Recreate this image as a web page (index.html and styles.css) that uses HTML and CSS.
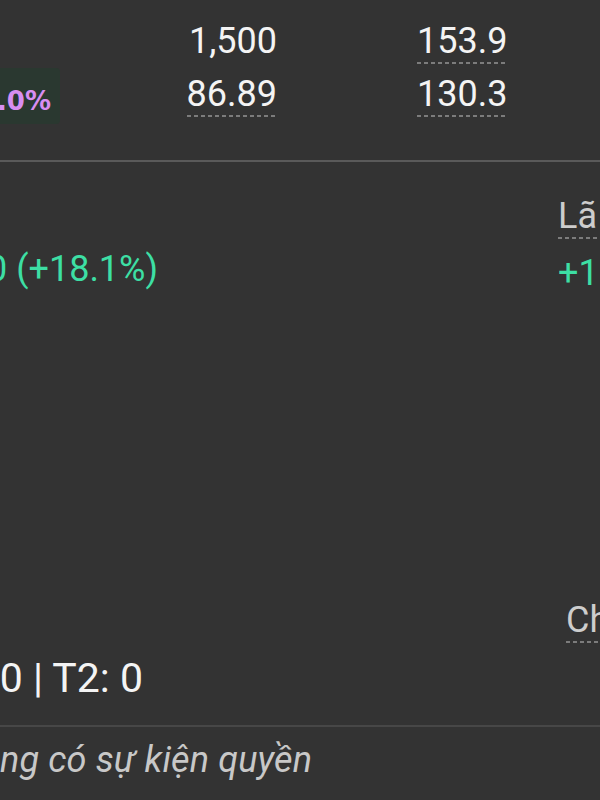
FILE: index.html
```html
<!DOCTYPE html>
<html lang="vi">
<head>
<meta charset="utf-8">
<title>Chi tiết mã</title>
<link rel="stylesheet" href="styles.css">
</head>
<body>
<section class="stats">
  <div class="stats-row">
    <div class="slot-badge"></div>
    <div class="slot-a"><span class="num">1,500</span></div>
    <div class="slot-gap"></div>
    <div class="slot-b"><span class="num dashed">153.9</span></div>
  </div>
  <div class="stats-row">
    <div class="slot-badge"><span class="badge">.0%</span></div>
    <div class="slot-a"><span class="num dashed">86.89</span></div>
    <div class="slot-gap"></div>
    <div class="slot-b"><span class="num dashed">130.3</span></div>
  </div>
</section>
<hr class="divider-strong">
<section class="detail">
  <div class="detail-left">
    <div class="gain-line"><span>0 (+18.1%)</span></div>
    <div class="t-line"><span>0 | T2: 0</span></div>
  </div>
  <div class="detail-right">
    <div class="label-line"><span class="label dashed">Lã</span></div>
    <div class="pl-value">+1</div>
    <div class="label-line more"><span class="label dashed">Ch</span></div>
  </div>
</section>
<hr class="divider-soft">
<div class="event-line"><span>ng có sự kiện quyền</span></div>
</body>
</html>
```
FILE: styles.css
```css
html, body {
  margin: 0;
  padding: 0;
  width: 600px;
  height: 800px;
  overflow: hidden;
}
body {
  background: #333333;
  color: #f4f4f4;
  font-family: Roboto, "Noto Sans", "Liberation Sans", sans-serif;
}
.dashed {
  background-image: repeating-linear-gradient(90deg, #7c7c7c 0 4px, transparent 4px 7px);
  background-size: 100% 2px;
  background-position: left bottom;
  background-repeat: no-repeat;
}
.stats {
  box-sizing: border-box;
  height: 160px;
  padding-top: 20px;
}
.stats-row {
  display: grid;
  grid-template-columns: 60px 217px 140px 91px;
  align-items: start;
  height: 53px;
}
.slot-a {
  display: flex;
  justify-content: flex-end;
}
.slot-b {
  display: flex;
  justify-content: flex-start;
}
.num {
  display: inline-block;
  font-size: 36px;
  line-height: 42px;
  padding-bottom: 2px;
  white-space: nowrap;
}
.slot-badge {
  display: flex;
  justify-content: flex-end;
  margin-top: -5px;
}
.badge {
  display: inline-block;
  white-space: nowrap;
  background: #2a3830;
  color: #d88ef2;
  font-family: "DejaVu Sans", Roboto, sans-serif;
  font-weight: 700;
  font-size: 26px;
  line-height: 30px;
  padding: 18px 9px 8px 0;
  border-radius: 0 4px 4px 0;
}
.divider-strong {
  margin: 0;
  border: 0;
  height: 2px;
  background: #5a5a5a;
}
.detail {
  display: flex;
  height: 563px;
}
.detail-left {
  width: 558px;
  flex: none;
}
.gain-line {
  width: 158px;
  display: flex;
  justify-content: flex-end;
  margin-top: 86px;
  font-size: 36px;
  line-height: 42px;
  color: #3ddfa4;
  white-space: nowrap;
}
.t-line {
  width: 143px;
  display: flex;
  justify-content: flex-end;
  margin-top: 364px;
  font-size: 41px;
  line-height: 48px;
  color: #f4f4f4;
  white-space: nowrap;
}
.detail-right {
  flex: none;
  white-space: nowrap;
}
.label-line {
  margin-top: 33px;
}
.label {
  display: inline-block;
  font-size: 36px;
  line-height: 42px;
  padding-bottom: 2px;
  padding-right: 4px;
  color: #cdcdcd;
}
.pl-value {
  margin-top: 13px;
  font-size: 36px;
  line-height: 42px;
  color: #3ddfa4;
}
.label-line.more {
  margin-top: 305px;
  margin-left: 8px;
}
.divider-soft {
  margin: 0;
  border: 0;
  height: 2px;
  background: #474747;
}
.event-line {
  margin-top: 12px;
  font-size: 36px;
  line-height: 42px;
  letter-spacing: 0.15px;
  font-style: italic;
  color: #c8c8c8;
  white-space: nowrap;
}
```
